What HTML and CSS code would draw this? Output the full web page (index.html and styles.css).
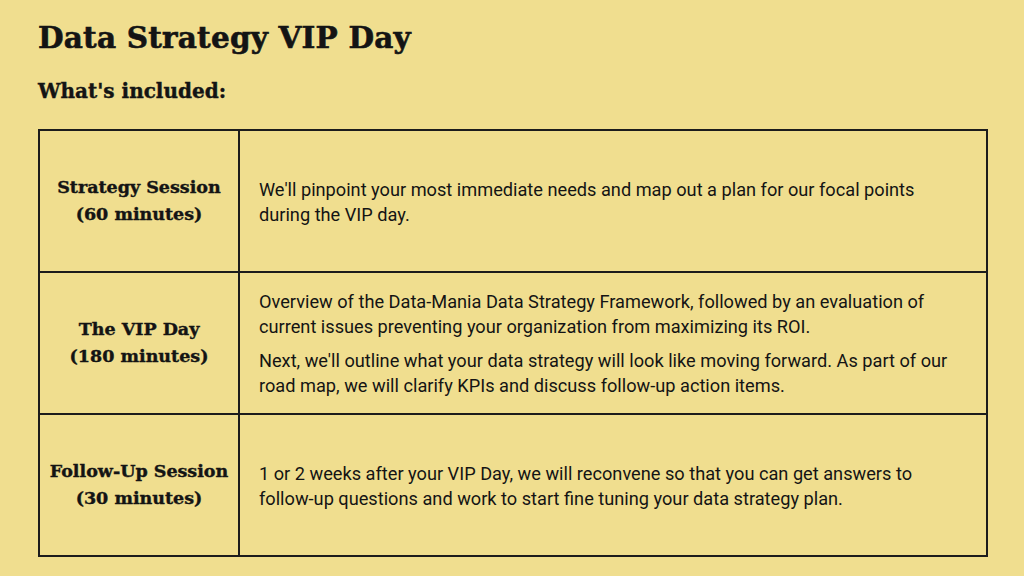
FILE: index.html
```html
<!DOCTYPE html>
<html lang="en">
<head>
<meta charset="utf-8">
<title>Data Strategy VIP Day</title>
<link rel="stylesheet" href="styles.css">
</head>
<body>
<main class="page">
  <h1 class="title">Data Strategy VIP Day</h1>
  <h2 class="subtitle">What's included:</h2>
  <table class="plan">
    <tr>
      <th>Strategy Session<br>(60 minutes)</th>
      <td><p>We'll pinpoint your most immediate needs and map out a plan for our focal points during the VIP day.</p></td>
    </tr>
    <tr>
      <th>The VIP Day<br>(180 minutes)</th>
      <td>
        <p>Overview of the Data-Mania Data Strategy Framework, followed by an evaluation of current issues preventing your organization from maximizing its ROI.</p>
        <p>Next, we'll outline what your data strategy will look like moving forward. As part of our road map, we will clarify KPIs and discuss follow-up action items.</p>
      </td>
    </tr>
    <tr>
      <th>Follow-Up Session<br>(30 minutes)</th>
      <td><p>1 or 2 weeks after your VIP Day, we will reconvene so that you can get answers to follow-up questions and work to start fine tuning your data strategy plan.</p></td>
    </tr>
  </table>
</main>
</body>
</html>
```
FILE: styles.css
```css
html, body {
  margin: 0;
  padding: 0;
}
body {
  background: #f0de8f;
  color: #141414;
  width: 1024px;
  height: 576px;
  overflow: hidden;
}
.page {
  padding: 18px 38px 0 38px;
}
.title {
  font-family: "DejaVu Serif", serif;
  font-weight: bold;
  font-size: 29.5px;
  line-height: 40px;
  margin: 0;
  letter-spacing: 0.2px;
  -webkit-text-stroke: 0.6px #141414;
}
.subtitle {
  font-family: "DejaVu Serif", serif;
  font-weight: bold;
  font-size: 20px;
  line-height: 28px;
  margin: 19px 0 0 0;
  -webkit-text-stroke: 0.4px #141414;
}
.plan {
  margin-top: 24px;
  width: 950px;
  border-collapse: collapse;
  table-layout: fixed;
}
.plan tr {
  height: 142px;
}
.plan th, .plan td {
  border: 2px solid #1c1c1c;
  vertical-align: middle;
}
.plan th {
  width: 198px;
  font-family: "DejaVu Serif", serif;
  font-weight: bold;
  font-size: 17.5px;
  line-height: 27px;
  text-align: center;
  padding: 0;
  -webkit-text-stroke: 0.4px #141414;
}
.plan td {
  font-family: Roboto, "Liberation Sans", sans-serif;
  font-size: 18.2px;
  line-height: 25px;
  padding: 1px 25px 0 19px;
}
.plan p {
  margin: 0;
}
.plan p + p {
  margin-top: 9px;
}
```
